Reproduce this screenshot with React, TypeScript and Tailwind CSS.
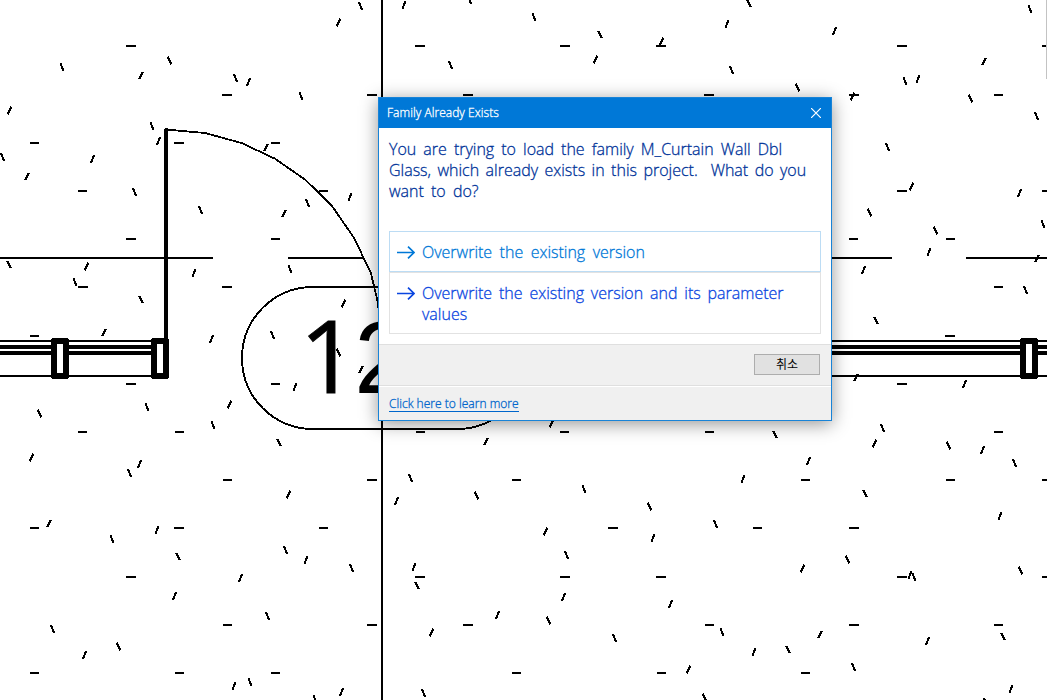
import React from "react";

type Point = [number, number];

const flat: Point[] = [
  [131, 46], [227, 95], [34.5, 143], [179, 143], [275.5, 143], [82.5, 191], [323.5, 191], [131, 239], [275.5, 239],
  [420, 46], [565, 46], [661, 46], [372, 95], [468, 95], [902, 46], [1046.5, 46], [709, 95], [854, 95], [998.5, 95],
  [902, 191], [1046.5, 191], [853.5, 239], [950.5, 239], [998.5, 287], [950, 336], [902, 384],
  [83, 287], [227, 287], [34.5, 336], [131, 384], [275.5, 384], [82.5, 432], [179.5, 432],
  [227.5, 480], [34.5, 528], [179, 528], [323.5, 528], [131, 577], [227.5, 625], [34.5, 673], [179.5, 673], [275.5, 673],
  [420.5, 432], [564.5, 432], [372, 480], [516.5, 480], [613, 528], [420, 577], [565, 577], [661, 577], [372, 625],
  [468, 625], [516.5, 673], [661.5, 673], [709.5, 432], [998.5, 432], [805.5, 480], [950.5, 480], [1046.5, 480],
  [757.5, 528], [854, 528], [902, 577], [1046.5, 577], [709.5, 625], [854, 625], [998.5, 625], [805.5, 673],
];

const falling: Point[] = [
  [62, 67], [169.5, 60.5], [235.5, 78], [301, 96], [152, 126], [2.5, 157], [134.5, 192], [200.5, 210], [307.5, 203],
  [360.5, 6], [469.5, 0], [534, 17], [600, 34.5], [450.5, 65], [749, 3.5], [1030, 9], [731.5, 70], [797.5, 87.5],
  [905, 81], [970.5, 98.5], [1036.5, 116], [887.5, 147], [869.5, 212.5], [935.5, 230.5], [1043, 224], [1025.5, 290],
  [876, 320.5], [9, 264.5], [75, 282], [141, 299.5], [290, 269], [272.5, 335], [338.5, 352.5], [147, 407],
  [39.5, 413.5], [213, 425], [279, 442.5], [129.5, 473], [112, 539], [178, 556.5], [285.5, 550], [52.5, 629],
  [118.5, 646.5], [267.5, 616], [250, 682], [315, 699], [410.5, 478], [476.5, 495.5], [584, 489], [649.5, 506.5],
  [351.5, 568], [417, 585.5], [566.5, 555], [548.5, 620.5], [614.5, 638], [423.5, 693], [775, 434.5], [882.5, 428],
  [948.5, 445.5], [1014.5, 463], [865, 493.5], [715.5, 524], [847.5, 559.5], [914, 577], [1020.5, 570.5],
  [722, 632], [788, 649.5], [853.5, 667], [1003, 636.5], [704.5, 697.5], [985.5, 702],
];

const rising: Point[] = [
  [338.5, 22.5], [141, 75.5], [248.5, 82], [9.5, 110.5], [158.5, 141], [92.5, 159], [27, 176.5], [266, 147.5],
  [284, 213.5], [350, 197], [404, 5], [595.5, 59.5], [661.5, 41.5], [727, 24], [834.5, 31], [984, 61.5], [918, 79],
  [852.5, 96.5], [911.5, 186.5], [1019.5, 193], [929, 252], [1037, 258.5], [863.5, 270], [856, 377.5], [964.5, 384],
  [86.5, 266.5], [194, 273], [343.5, 303.5], [104, 332.5], [211.5, 339], [361, 369.5], [295, 387], [229.5, 404.5],
  [31.5, 457.5], [139.5, 464], [49, 523.5], [157, 530], [288.5, 494.5], [306, 560], [240.5, 578], [174.5, 596],
  [84.5, 655], [234, 686], [341.5, 692], [551.5, 423.5], [486, 441.5], [396.5, 501], [545.5, 531.5], [653, 538],
  [414, 567], [563.5, 597], [670.5, 604], [497.5, 615], [431.5, 632.5], [688.5, 669.5], [874.5, 443.5],
  [982.5, 450], [808.5, 461], [743, 479], [1000, 516], [802.5, 568.5], [910, 575], [820, 634.5], [754, 652],
  [927.5, 641], [1011, 689],
];

const flatHatch = flat.map(([x, y]) => `M${x - 4.6} ${y}h9.2`).join("");

const slantedHatch = [
  ...falling.map(([x, y]) => `M${x - 1.8} ${y - 3.8}l3.6 7.6`),
  ...rising.map(([x, y]) => `M${x - 1.8} ${y + 3.8}l3.6 -7.6`),
].join("");

function Mullion({ x }: { x: number }) {
  return <rect x={x + 3} y={341} width={12} height={35} fill="white" stroke="black" strokeWidth={6} strokeLinejoin="round" />;
}

function Drawing() {
  return (
    <svg className="block h-[700px] w-[1047px]" viewBox="0 0 1047 700" shapeRendering="crispEdges">
      <path d={flatHatch} fill="none" stroke="black" strokeWidth={2} />
      <path d={slantedHatch} fill="none" stroke="black" strokeWidth={2.2} />
      <path d="M382 0V700M0 258H213.4M288 258H363M832 258H891.6M966 258H1047" stroke="black" strokeWidth={2} />
      <path
        d="M166 129.5L205 133L241.5 143L275 158.7L306 180.3L332.5 206.7L354.3 238.3L363.5 257.7L371 273.5L377.7 301.7L382 340"
        fill="none"
        stroke="black"
        strokeWidth={1.8}
      />
      <path d="M164 130q0-2 2-2t2 2V342h-4z" />
      <path d="M313 287H457A71 71 0 0 1 457 429H313A71 71 0 0 1 313 287Z" fill="none" stroke="black" strokeWidth={1.9} />
      <path d="M0 341H166M0 376H166M832 341H1047M832 376H1047" stroke="black" strokeWidth={2} />
      <path d="M0 347H166M0 353H166M832 347H1047M832 353H1047" stroke="black" strokeWidth={4} />
      <Mullion x={51} />
      <Mullion x={151} />
      <Mullion x={1020} />
      <text x="299.5" y="392.6" fontSize="101" fontFamily="'Open Sans', sans-serif" stroke="black" strokeWidth="1">
        1<tspan x="354.3" y="393" fontSize="101.5" strokeWidth="0" fontFamily="'Liberation Sans', Arial, sans-serif">2</tspan>
      </text>
      <rect x="1046" y="0" width="1" height="79" fill="#c3c3c3" />
    </svg>
  );
}

function Arrow() {
  return (
    <svg className="mt-[14px] ml-[7px] h-[13px] w-[18px] shrink-0" viewBox="0 0 18 13" fill="none" stroke="currentColor" strokeWidth="1.7">
      <path d="M0 6.5H17M11 .6L17 6.5L11 12.4" />
    </svg>
  );
}

export default function App() {
  return (
    <div className="relative h-[700px] w-[1047px] overflow-hidden bg-white font-['Open_Sans','Noto_Sans_CJK_KR',sans-serif]">
      <Drawing />
      <section className="absolute top-[97px] left-[378px] flex h-[324px] w-[454px] flex-col border border-[#1883d7] bg-white shadow-[0_3px_17px_rgba(0,0,0,0.42)]">
        <header className="flex h-[30px] shrink-0 items-center justify-between bg-[#0078d7] pr-[10px] pl-2 text-white">
          <h1 className="text-[12px] font-light tracking-[0.05px] whitespace-pre [-webkit-text-stroke:0.3px_currentColor]">Family Already Exists</h1>
          <button aria-label="Close">
            <svg className="h-[10px] w-[10px]" viewBox="0 0 10 10" stroke="currentColor" strokeWidth="1.2">
              <path d="M0 0L10 10M10 0L0 10" />
            </svg>
          </button>
        </header>
        <div className="h-[103px] shrink-0 pt-[11px] pl-[10px] text-[16px] leading-[21px] font-light [-webkit-text-stroke:0.3px_currentColor] whitespace-pre text-[#003399]">
          <p className="[word-spacing:2.9px]">You are trying to load the family M_Curtain Wall Dbl</p>
          <p className="[word-spacing:2.3px]">Glass, which already exists in this project.  What do you</p>
          <p className="[word-spacing:3px]">want to do?</p>
        </div>
        <div className="flex h-[113px] shrink-0 flex-col px-[10px] text-left text-[16px] leading-[21px] font-light [-webkit-text-stroke:0.3px_currentColor]">
          <button className="flex h-[41px] items-start border border-[#bcdcf4] text-left [word-spacing:3.3px] text-[#0078d7]">
            <Arrow />
            <span className="pt-[10px] pl-[7px] whitespace-pre">Overwrite the existing version</span>
          </button>
          <button className="flex h-[62px] items-start border border-[#e2e2e2] text-left [word-spacing:2.7px] text-[#0a46e0]">
            <Arrow />
            <span className="pt-[10px] pl-[7px] whitespace-pre">
              Overwrite the existing version and its parameter<br />values
            </span>
          </button>
        </div>
        <div className="flex h-[42px] shrink-0 justify-end border-t border-b border-[#dfdfdf] bg-[#f0f0f0] pt-[9px] pr-[11px]">
          <button className="flex h-[21px] w-[66px] items-center justify-center border border-[#adadad] bg-[#e1e1e1] pb-px font-['Noto_Sans_CJK_KR',sans-serif] text-[12px] leading-none text-black">취소</button>
        </div>
        <footer className="flex grow items-start border-t border-white bg-[#f0f0f0] pt-[9px] pl-[10px]">
          <a className="block h-[16px] border-b border-[#0066cc] text-[12px] leading-[16px] font-light tracking-[0.02px] whitespace-pre text-[#0066cc] [-webkit-text-stroke:0.3px_currentColor]">Click here to learn more</a>
        </footer>
      </section>
    </div>
  );
}
